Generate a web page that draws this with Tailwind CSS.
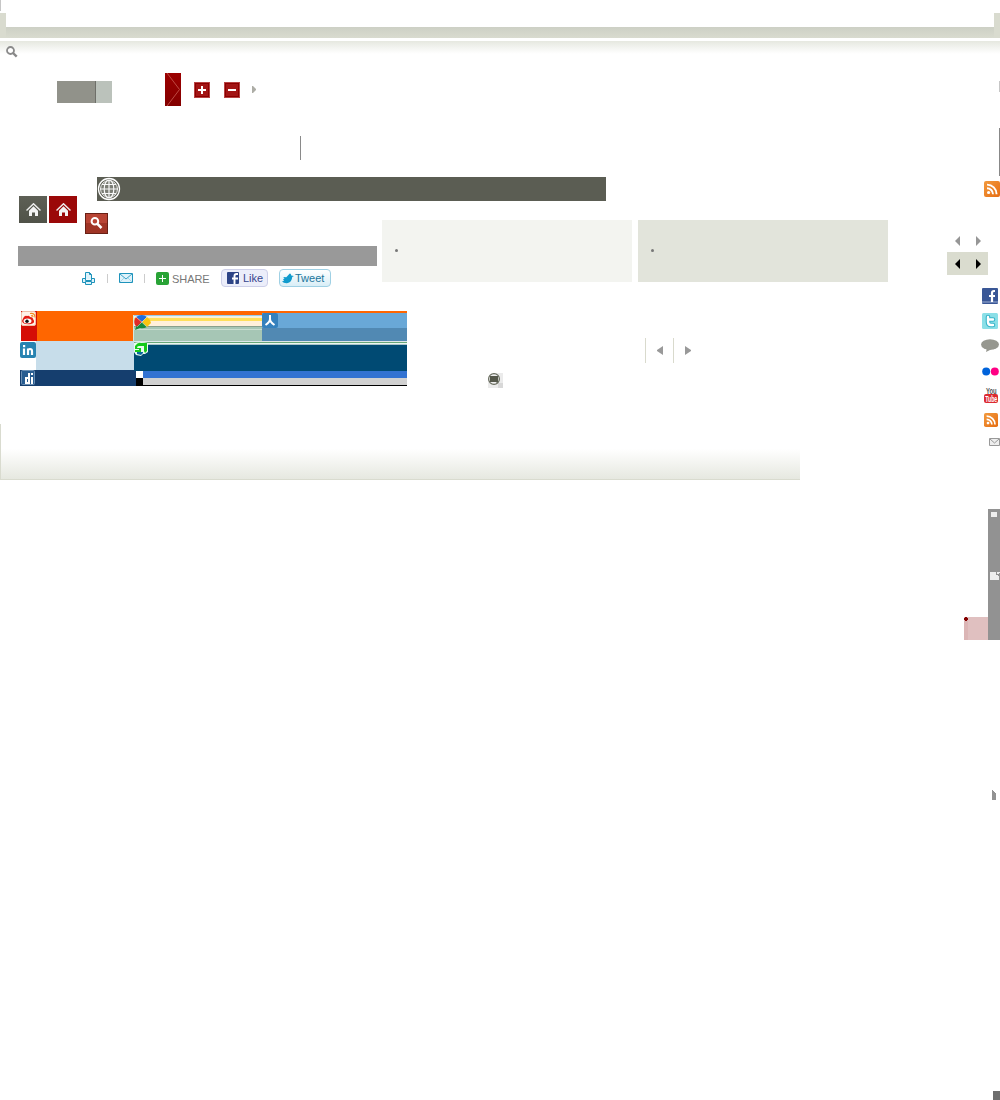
<!DOCTYPE html>
<html lang="en">
<head>
<meta charset="utf-8">
<title>Interface sprites</title>
<script src="https://cdn.jsdelivr.net/npm/@tailwindcss/browser@4"></script>
</head>
<body class="bg-white font-['Liberation_Sans',Arial,sans-serif]">
<svg class="absolute size-0">
  <defs>
    <linearGradient id="org" x2="1" y2="1"><stop stop-color="#f29a3e"/><stop offset="1" stop-color="#e66d12"/></linearGradient>
    <symbol id="rss" viewBox="0 0 16 16"><rect width="16" height="16" rx="2" fill="url(#org)"/><circle cx="4.600" cy="11.500" r="1.600" fill="#fff"/><path d="M3 7.200a6 6 0 0 1 6 6M3 3.600a9.600 9.600 0 0 1 9.600 9.600" fill="none" stroke="#fff" stroke-width="1.900"/></symbol>
    <symbol id="home" viewBox="0 0 15 13"><path d="M.5 7.500 7.500.8l7 6.700" fill="none" stroke="#eee" stroke-width="1.500"/><path d="M3 7.700 7.500 3.200 12 7.700V13H9V9.500H6V13H3z" fill="#f4f4f4"/></symbol>
    <symbol id="left" viewBox="0 0 5 10"><path d="M5 0v10L0 5z" fill="currentColor"/></symbol>
    <symbol id="right" viewBox="0 0 5 10"><path d="M0 0v10l5-5z" fill="currentColor"/></symbol>
  </defs>
</svg>
<div class="flex h-[1100px] w-[1000px] flex-col overflow-hidden">
  <header class="shrink-0">
    <div class="h-[13px]"><div class="h-[11px] w-px bg-[#c6c6c6]"></div></div>
    <div class="h-[25px] bg-[#d9dbcf] px-1.5">
      <div class="h-3.5 bg-white"></div>
      <div class="h-[11px] bg-linear-to-b from-[#cdd0c5] to-[#d9dbcf]"></div>
    </div>
    <div class="h-[3px]"></div>
  </header>

  <div class="flex grow">
    <main class="w-[940px]">
      <div class="h-8 w-[1000px] bg-linear-to-b from-[#e6e8e0] via-white via-40% to-white pt-[5px] pl-1.5">
        <svg class="h-3 w-3" viewBox="0 0 12 12"><circle cx="4.500" cy="4.500" r="3.500" fill="#fff" stroke="#8a8a8a" stroke-width="1.800"/><path d="m7 7 3.700 3.700" stroke="#888" stroke-width="2.400"/></svg>
      </div>

      <div class="flex h-[33px] items-start">
        <div class="mt-2 ml-[57px] h-[22px] w-[38px] bg-[#91928a]"></div>
        <div class="mt-2 h-[22px] w-[17px] border-l border-[#6e6f69] bg-[#bbc2bb]"></div>
        <svg class="ml-[53px] h-[33px] w-4 bg-linear-to-b from-[#9c0000] to-[#830000]" viewBox="0 0 16 33"><path d="m2 0 12.500 16.500L2 33" fill="none" stroke="#bd4a42"/></svg>
        <svg class="mt-[9px] ml-[13px] size-4" viewBox="0 0 16 16"><rect x=".5" y=".5" width="15" height="15" fill="#a31515" stroke="#b84444"/><rect x="1.500" y="1.500" width="13" height="13" fill="none" stroke="#8c0000"/><path d="M4 8h8M8 4v8" stroke="#fff" stroke-width="2"/></svg>
        <svg class="mt-[9px] ml-3.5 size-4" viewBox="0 0 16 16"><rect x=".5" y=".5" width="15" height="15" fill="#a31515" stroke="#b84444"/><rect x="1.500" y="1.500" width="13" height="13" fill="none" stroke="#8c0000"/><path d="M4 8h8" stroke="#fff" stroke-width="2"/></svg>
        <svg class="mt-[13px] ml-3 h-[7px] w-1 text-[#adada6]" viewBox="0 0 4 7"><path d="M0 0h1l3 3v1L1 7H0z" fill="currentColor"/></svg>
      </div>

      <div class="mt-[30px] ml-[300px] h-6 w-px bg-[#8a8a8a]"></div>

      <div class="mt-[17px] ml-[97px] h-6 w-[509px] bg-[#5b5d53]">
        <svg class="h-6 w-6" viewBox="0 0 24 24"><circle cx="12" cy="12" r="10.500" fill="#5b5d53" stroke="#fff" stroke-width="1.300"/><circle cx="12" cy="12" r="8.500" fill="#7b7d75" stroke="#e8e8e6"/><path d="M12 3v18M3 12h18M5 7.500h14M5 16.500h14" stroke="#f8f8f8" stroke-width="1.200"/><ellipse cx="12" cy="12" rx="4.800" ry="9" fill="none" stroke="#f8f8f8" stroke-width="1.200"/></svg>
      </div>

      <div class="-mt-[5px] flex h-[115px] items-start">
        <div class="w-[382px]">
          <div class="flex gap-0.5 pl-[19px]">
            <div class="flex h-[27px] w-7 justify-center bg-linear-to-b from-[#5e6056] to-[#505248] pt-[7px] pl-px"><svg class="h-[13px] w-[15px]"><use href="#home"/></svg></div>
            <div class="flex h-[27px] w-7 justify-center bg-[#9b0808] pt-[7px] pl-px"><svg class="h-[13px] w-[15px]"><use href="#home"/></svg></div>
          </div>
          <svg class="-mt-2.5 ml-[85px] block h-[21px] w-[23px]" viewBox="0 0 23 21"><rect width="23" height="21" fill="#692015"/><rect x="1" y="1" width="21" height="9" fill="#b84434"/><rect x="1" y="10" width="21" height="10" fill="#9f3425"/><circle cx="9.900" cy="8.200" r="3.300" fill="none" stroke="#fff" stroke-width="2"/><path d="m12.200 10.700 4.300 4.300" stroke="#fff" stroke-width="2.600"/></svg>
          <div class="mt-3 ml-[18px] h-5 w-[359px] bg-[#999]"></div>
          <div class="mt-[3px] ml-[82px] flex h-[18px] items-center">
            <svg class="h-[13px] w-[13px]" viewBox="0 0 13 13" fill="#dff2fa" stroke="#1e93bb"><path d="M3.500 7.500v-7h4l2 2v5M7.500.5v2h2M.5 6.500h3v2h6v-2h3v4H.500z"/><path d="M3.500 9.500h6v3h-6z"/></svg>
            <div class="ml-3 h-[9px] w-px bg-[#ccc]"></div>
            <svg class="ml-[11px] h-2.5 w-3.5" viewBox="0 0 14 10"><path d="M.5.5h13v9H.5z" fill="#dff2fa" stroke="#1e93bb"/><path d="m1 1 6 5 6-5" fill="none" stroke="#3aa2c8"/><path d="m1 9 4-4m8 4L9 5" stroke="#a7d8ea"/></svg>
            <div class="ml-[11px] h-[9px] w-px bg-[#ccc]"></div>
            <svg class="ml-[11px] h-[13px] w-[13px]" viewBox="0 0 13 13"><rect width="13" height="13" rx="2" fill="#29a336"/><path d="M3 6.500h7M6.500 3v7" stroke="#fff"/></svg>
            <span class="ml-[3px] w-[39px] pt-0.5 text-[11px] leading-4 tracking-[-0.05px] text-[#777]">SHARE</span>
            <div class="ml-[10px] flex h-[18px] w-[47px] items-center rounded border border-[#cdcfe8] bg-[#eceefa] pl-[5px]">
              <svg class="h-3 w-3" viewBox="0 0 12 12"><rect width="12" height="12" rx="1" fill="#2d4486"/><path d="M11 2H9.500Q7.500 2 7.500 4v8M5 6.500h6" fill="none" stroke="#fff" stroke-width="1.900"/></svg>
              <span class="ml-1 text-[11px] leading-4 text-[#36458d]">Like</span>
            </div>
            <div class="ml-[11px] flex h-[18px] w-[52px] items-center rounded border border-[#9fd0e4] bg-linear-to-b from-white to-[#d9eef7] pl-0.5">
              <svg class="h-[11px] w-3" viewBox="0 0 12 11"><path d="M0 8.500 2 7.800 1 6l1.500-.2L1.300 4l3 .2L7.500.7q1.500-.5 1.700 1.800L12 3l-1.800 1Q10 9.500 5 10.200 2 10.500 0 8.500" fill="#109bcd"/></svg>
              <span class="ml-px text-[11px] leading-4 text-[#21759b]">Tweet</span>
            </div>
          </div>
        </div>
        <div class="mt-6 h-[62px] w-[250px] bg-[#f3f4f0] pt-[29px] pl-[13px]"><div class="size-[3px] rounded-full bg-[#777]"></div></div>
        <div class="mt-6 ml-1.5 h-[62px] w-[250px] bg-[#e2e4db] pt-[29px] pl-[13px]"><div class="size-[3px] rounded-full bg-[#777]"></div></div>
      </div>

      <div class="flex h-[75px]">
        <div class="ml-5 flex w-[387px]">
          <div class="w-[113px]">
            <div class="flex h-[30px] border-l border-white bg-[#f60]">
              <div class="h-[30px] w-4 bg-[#d50e06]"><svg class="size-4" viewBox="0 0 16 16"><rect x=".5" y=".5" width="14" height="14" rx="1.500" fill="#fff2e8" stroke="#f0c0a8"/><path d="M9 2.500q5-1 5 4M10 5q2-1 2 1" fill="none" stroke="#f28a1c" stroke-width="1.100"/><path d="M1 10q2-6 5-5 2-1 3 1 3 0 3 2 3 4-2 5-8 1-9-3" fill="#e21c13"/><ellipse cx="6.500" cy="10" rx="4" ry="2.500" fill="#fff"/><circle cx="6" cy="10.300" r="1.700" fill="#111"/></svg></div>
            </div>
            <div class="flex h-[29px]">
              <div class="w-4 pt-px"><svg class="size-4" viewBox="0 0 16 16"><rect width="16" height="16" rx="2" fill="#2783b1"/><path d="M4 6.500V13M8 6.500V13M8 9.200Q8 7 10 7t2 2.200V13" fill="none" stroke="#fff" stroke-width="2.200"/><rect x="3" y="3" width="2.200" height="2.200" fill="#fff"/></svg></div>
              <div class="w-[98px] shrink-0 bg-[#c7ddea]"></div>
            </div>
            <div class="h-4 w-[116px] bg-[#153e6e]"><svg class="size-4" viewBox="0 0 16 16"><rect x="1.500" y=".5" width="13" height="14" rx="1" fill="#285d91" stroke="#6a8fb4"/><path d="M8 3h2v11H5V7h3zM7 9v3h1V9z" fill="#fff" fill-rule="evenodd"/><path d="M11 3h2v2h-2zM11 7h2v7h-2z" fill="#fff"/></svg></div>
          </div>
          <div class="w-[274px]">
            <div class="flex h-[30px] items-end bg-[#f60]">
              <div class="relative h-[26px] w-[129px] border-l border-[#d9e7dc] bg-[#a6c6b5]">
                <div class="h-px bg-[#9bcbe9]"></div><div class="h-px bg-[#e8f2ea]"></div><div class="h-px bg-[#fff0cc]"></div><div class="h-[3px] bg-[#ffdf5a]"></div><div class="h-[5px] bg-[#fff0da]"></div><div class="h-px bg-[#89a08c]"></div><div class="mt-[2px] h-px bg-[#c9ded1]"></div>
                <svg class="absolute top-0 left-0 h-[15px] w-[17px]" viewBox="0 0 17 15"><path d="M2 2Q8-2 13 2L8 7z" fill="#216dda"/><path d="M13 2q3 2 4 6l-4 4-5-5z" fill="#f9c510"/><path d="M2 2Q-1 6 1 10l2 2 5-5z" fill="#df2b28"/><path d="m8 7 5 5q-4 2-7 1l-5 2 1-3z" fill="#168a3b"/><path d="m2 2 11 10M13 2 3 12" stroke="#fff" stroke-width=".4"/></svg>
              </div>
              <div class="h-7 w-[145px] bg-[#5189b3]">
                <div class="h-[15px] bg-[#69a8d7]"><svg class="h-[15px] w-4" viewBox="0 0 16 15"><rect width="16" height="15" rx="2" fill="#3481bd"/><path d="M8 2v4q0 3-4.500 6M8 6q0 3 4.500 6" fill="none" stroke="#fff" stroke-width="2"/></svg></div>
              </div>
            </div>
            <div class="relative ml-px h-[30px] bg-[#004a73]">
              <div class="h-px bg-[#dfe7ea]"></div><div class="h-px bg-[#68a779]"></div><div class="h-px bg-[#edf7f1]"></div><div class="h-px bg-[#a9c4c9]"></div>
              <svg class="absolute top-px left-0 h-3.5 w-3.5" viewBox="0 0 14 14"><path d="M0 1q7-2 14 0v9l-3 2H9l-2 2-5-1-2-3z" fill="#e9faef"/><path d="M3 10h6v1l-2 2-4-1z" fill="#086a9d"/><path d="M1 4q3-4 6-3h6v8l-2 2-1-2V4H5Q3 4 3 6h4v4H1V8h4V7H1z" fill="#15c91a"/></svg>
            </div>
            <div class="ml-[3px] h-[15px] border-b border-black">
              <div class="flex h-[7px]"><div class="w-[7px] bg-white"></div><div class="grow bg-[#3373d2]"></div></div>
              <div class="flex h-[7px]"><div class="w-[7px] bg-black"></div><div class="grow bg-[#d1d1d1]"></div></div>
            </div>
          </div>
        </div>
        <svg class="mt-[62px] ml-[81px] h-[15px] w-[15px] shrink-0" viewBox="0 0 15 15"><path d="M0 6h5V0h10v15H0z" fill="#ebebeb"/><rect x="10" y="10" width="5" height="5" fill="#d8d8d8"/><circle cx="6" cy="6" r="5.400" fill="#eee" stroke="#666a5c" stroke-width="1.200"/><path d="M2 3h8v6l-1 1-1-1H2z" fill="#55584b"/></svg>
        <div class="mt-[27px] ml-[142px] flex h-[25px] items-center border-l border-[#d9dacd]">
          <svg class="ml-[11px] h-[9px] w-[6px] text-[#999]" viewBox="0 0 5 9" preserveAspectRatio="none"><path d="M5 0v9L0 5V4z" fill="currentColor"/></svg>
          <div class="ml-[10px] h-[25px] w-px bg-[#d9dacd]"></div>
          <svg class="ml-[11px] h-[9px] w-[6px] text-[#999]" viewBox="0 0 5 9" preserveAspectRatio="none"><path d="M0 0v9l5-4V4z" fill="currentColor"/></svg>
        </div>
      </div>

      <div class="mt-[38px] h-14 w-[800px] border-b border-l border-[#d9dbcf] bg-linear-to-b from-white from-45% to-[#e6e8e0]"></div>
    </main>

    <aside class="flex w-[60px] flex-col items-end pt-10">
      <div class="h-[11px] w-px bg-[#c6c6c6]"></div>
      <div class="mt-9 h-12 w-px bg-[#888]"></div>
      <svg class="mt-[5px] size-4 shrink-0"><use href="#rss"/></svg>
      <div class="mt-[39px] mr-[19px] flex gap-4 text-[#969696]"><svg class="h-2.5 w-[5px]"><use href="#left"/></svg><svg class="h-2.5 w-[5px]"><use href="#right"/></svg></div>
      <div class="mt-1.5 mr-3 flex h-[23px] w-[41px] items-center justify-center gap-4 bg-[#dadccf] pl-px text-black"><svg class="h-2.5 w-[5px]"><use href="#left"/></svg><svg class="h-2.5 w-[5px]"><use href="#right"/></svg></div>
      <svg class="mt-[13px] mr-0.5 size-4" viewBox="0 0 16 16"><rect width="16" height="16" rx="1" fill="#3a5796"/><path d="M0 13h16v2H0z" fill="#6c83b5"/><path d="M13 3h-1q-2 0-2 2v9M7 8h6" fill="none" stroke="#fff" stroke-width="2.200"/></svg>
      <svg class="mt-[9px] mr-0.5 size-4" viewBox="0 0 16 16"><rect width="16" height="16" rx="1.500" fill="#8bdfe7"/><path d="M6 4v5q0 3 3 3h2M6 6.500h5" fill="none" stroke="#38b5ca" stroke-width="4.600" stroke-linecap="round"/><path d="M6 4v5q0 3 3 3h2M6 6.500h5" fill="none" stroke="#fff" stroke-width="2.400" stroke-linecap="round"/></svg>
      <svg class="mt-2.5 mr-px h-[13px] w-[18px]" viewBox="0 0 18 13"><ellipse cx="9" cy="5.500" rx="9" ry="5.300" fill="#96978f"/><path d="m6 9-1 4 6-3z" fill="#96978f"/></svg>
      <svg class="mt-[15px] mr-px h-[9px] w-[17px]" viewBox="0 0 17 9"><circle cx="4.200" cy="4.500" r="4" fill="#0063db"/><circle cx="12.800" cy="4.500" r="4" fill="#ff0084"/></svg>
      <svg class="mt-2.5 mr-0.5 h-[17px] w-3.5 overflow-visible" viewBox="0 0 14 17"><text transform="translate(2 7.500) scale(.62 1)" font-family="Liberation Sans" font-weight="bold" font-size="9.500" fill="#555">You</text><rect y="8" width="14" height="9" rx="2" fill="#dc2a30"/><text transform="translate(1.200 15.800) scale(.58 1)" font-family="Liberation Sans" font-weight="bold" font-size="9" fill="#fff">Tube</text></svg>
      <svg class="mt-2.5 mr-0.5 size-3.5 shrink-0"><use href="#rss"/></svg>
      <svg class="mt-[11px] h-2 w-[11px]" viewBox="0 0 11 8"><path d="M.5.5h10v7H.5z" fill="#eee" stroke="#999"/><path d="m1 1 4.500 4L10 1" fill="none" stroke="#999"/></svg>
      <div class="mt-[63px] flex h-[131px] items-end">
        <div class="h-[23px] w-6 border-l-4 border-[#dbb5b5] bg-[#e0c0c0]"><svg class="-ml-1 size-1" viewBox="0 0 4 4"><path d="M1 0h2v1h1v2H3v1H1V3H0V1h1z" fill="#850000"/></svg></div>
        <div class="h-[131px] w-3 bg-[#929292]">
          <div class="h-[63px] pt-[3px] pl-[3px]"><div class="h-[5px] w-1.5 bg-[#eee]"></div></div>
          <svg class="ml-0.5 h-2 w-2.5" viewBox="0 0 10 8"><path d="M0 0h6v3h2v1h1v4H0zM7 0h3v1H9v1H7z" fill="#eee"/></svg>
        </div>
      </div>
      <svg class="mt-[150px] mr-1 h-2.5 w-1" viewBox="0 0 4 10"><path d="M0 0h1v1h1v1h1v1h1v7H0z" fill="#929292"/></svg>
      <div class="mt-[291px] h-[9px] w-[7px] bg-[#6e6e6e]"></div>
    </aside>
  </div>
</div>
</body>
</html>
